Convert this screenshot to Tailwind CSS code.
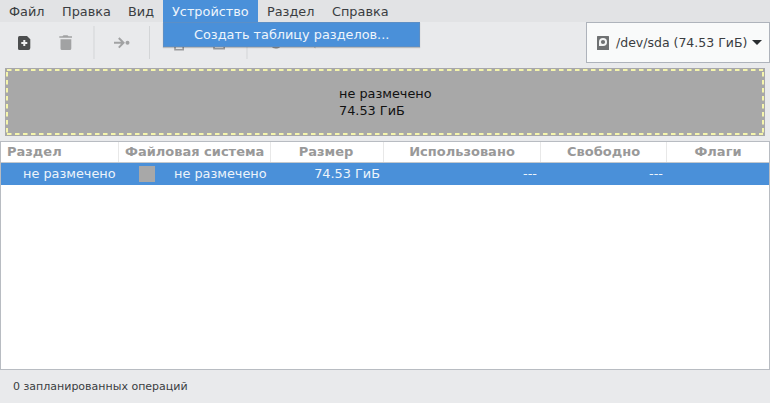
<!DOCTYPE html>
<html lang="ru">
<head>
<meta charset="utf-8">
<title>GParted</title>
<script src="https://cdn.jsdelivr.net/npm/@tailwindcss/browser@4"></script>
</head>
<body class="w-[770px] h-[403px] overflow-hidden bg-[#e9eaec] font-['DejaVu_Sans',sans-serif] text-[12.850px] text-[#3a3d41]">
<div class="flex h-full flex-col">
  <nav class="flex h-[22px] shrink-0 bg-[#e2e3e5] leading-[23px] whitespace-nowrap">
    <div class="w-[53px] pl-[9px]">Файл</div>
    <div class="w-[66px] pl-[9px]">Правка</div>
    <div class="w-[44px] pl-[9px]">Вид</div>
    <div class="relative w-[95px] bg-[#4a90d9] pl-[9px] text-[#eef5fc]">Устройство
      <div class="absolute left-0 top-[22px] z-10 h-[25px] w-[257px] border border-[#5c8fc6] bg-[#4a90d9] pl-[30px] leading-[23px] shadow-[0_1px_1px_#0003]">Создать таблицу разделов...</div>
    </div>
    <div class="w-[65px] pl-[9px]">Раздел</div>
    <div class="pl-[9px]">Справка</div>
  </nav>

  <div class="flex h-[46px] shrink-0 justify-between">
    <svg class="h-[46px] w-[340px]" viewBox="0 0 340 46" fill="none">
      <path d="M18 15.500q0-1.500 1.500-1.500H27l3.300 3.300V26q0 2-2 2H19.500q-1.500 0-1.500-1.500z" fill="#4c4e4f"/>
      <path d="M24.300 18v6M21.300 21h6" stroke="#eff0f1" stroke-width="2"/>
      <path d="M59.300 15.800v-1.600h3.200l1-.9h4l1 .9h3.500v1.600zM60.500 17.200h10.800V26.500q0 1.500-1.500 1.500h-7.800q-1.500 0-1.500-1.500z" fill="#a1a2a3"/>
      <path d="M94 4v33M149.500 4v33M247 4v33" stroke="#d3d5d7"/>
      <path d="M114 20.800h9M118.800 16l4.700 4.800-4.700 4.800" stroke="#a1a2a3" stroke-width="2"/>
      <circle cx="127.500" cy="20.800" r="2" fill="#a1a2a3"/>
      <path d="M175 20v7.800h8.200V20M214 20v6.800h10.200V20" stroke="#999a9c" stroke-width="1.600"/>
      <path d="M271 24h9.500q-1 2.700-4.500 2.700t-5-2.700M313.500 24h1.800v2.500z" fill="#999a9c"/>
    </svg>
    <div class="flex h-[41px] w-[184px] items-center border border-[#aeb3bb] bg-[#f9fafa] pl-[10px]">
      <svg class="h-[14px] w-[12px]" viewBox="0 0 12 14"><rect width="12" height="14" rx=".5" fill="#6f7172"/><path d="M2 6a4 4 0 1 1 4 4H2z" fill="#f3f4f4"/><circle cx="6" cy="6" r="2.100" fill="#6f7172"/></svg>
      <span class="ml-[7px] w-[132px] whitespace-nowrap text-[12.500px] leading-[20px]">/dev/sda (74.53 ГиБ)</span>
      <svg class="ml-[4px] h-[5px] w-[10px]" viewBox="0 0 10 5"><path d="M0 0h10L5 5z" fill="#292d30"/></svg>
    </div>
  </div>

  <div class="relative ml-[5px] h-[68px] w-[760px] shrink-0 bg-[#a8a8a8]">
    <svg class="absolute inset-0" width="760" height="68" fill="none"><path d="M2 2H758M2 66H758" stroke="#f5f5ac" stroke-width="2" stroke-dasharray="4.500 3.500"/><path d="M2 4V67M758 4V67" stroke="#f5f5ac" stroke-width="2" stroke-dasharray="4.500 3.500"/></svg>
    <div class="relative pl-[334px] pt-[18px] leading-[16.500px] text-[#111]">не размечено<br>74.53 ГиБ</div>
  </div>

  <main class="mt-[5px] h-[229px] w-[770px] shrink-0 border border-[#b8bcc2] bg-white">
    <div class="flex h-[21px] border-b border-[#c3c8cd] text-center text-[13px] font-bold leading-[19px] text-[#999] whitespace-nowrap">
      <div class="w-[118px] border-r border-[#e8e8e8] pl-[6px] text-left">Раздел</div>
      <div class="w-[152px] border-r border-[#e8e8e8] pl-[6px] text-left">Файловая система</div>
      <div class="w-[113px] border-r border-[#e8e8e8] pr-[2px]">Размер</div>
      <div class="w-[157px] border-r border-[#e8e8e8]">Использовано</div>
      <div class="w-[126px] border-r border-[#e8e8e8]">Свободно</div>
      <div class="flex-1">Флаги</div>
    </div>
    <div class="flex h-[22px] items-center bg-[#4a90d9] leading-[22px] text-[#edf4fb] whitespace-nowrap">
      <div class="w-[118px] pl-[22px]">не размечено</div>
      <div class="flex w-[152px] items-center pl-[20px]"><span class="mr-[19px] size-[16px] shrink-0 bg-[#a8a8a8]"></span>не размечено</div>
      <div class="w-[113px] pr-[4px] text-right">74.53 ГиБ</div>
      <div class="w-[157px] pr-[4px] text-right">---</div>
      <div class="w-[126px] pr-[4px] text-right">---</div>
    </div>
  </main>
  <footer class="pl-[13px] pt-[9px] text-[11px] leading-[16px]">0 запланированных операций</footer>
</div>
</body>
</html>
